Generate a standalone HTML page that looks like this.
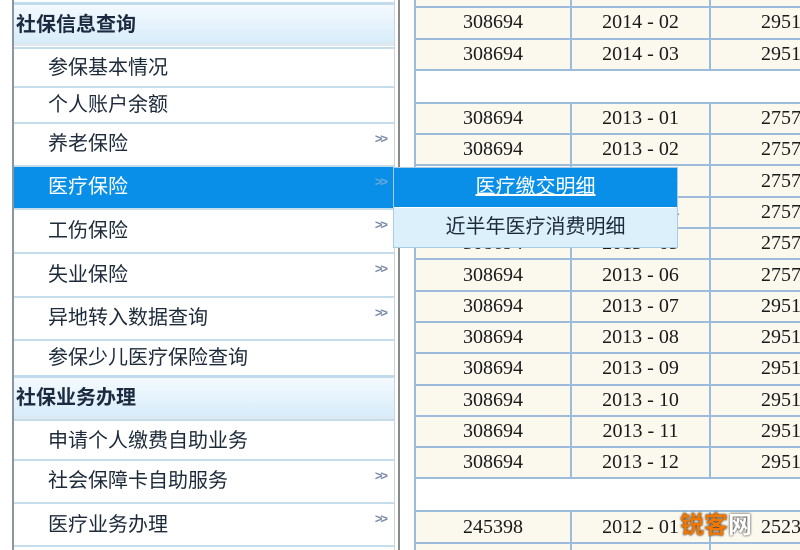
<!DOCTYPE html>
<html style="overflow:hidden;width:800px;height:550px"><head><meta charset="utf-8"><style>
body{margin:0;width:800px;height:550px;overflow:hidden;background:#fff;position:relative;font-family:"Liberation Sans","Noto Sans CJK SC",sans-serif}
.side{position:absolute;left:12px;top:0;width:380px;height:550px;border-left:2px solid #8a96a0;border-right:1px solid #c8d6e2;background:#fff}
.r{position:absolute;left:0;width:380px;border-top:2px solid #c5dcea;font-size:20px;color:#1c2a3a;box-sizing:border-box;padding-left:34px}
.h{position:absolute;left:0;width:380px;font-size:20px;font-weight:bold;color:#1c2a40;padding-left:2px;box-sizing:border-box;background:linear-gradient(#f4fafe,#d7ecfa);border-top:3px solid #c2dbec;border-bottom:3px solid #dfe8ef}
.ar{position:absolute;right:8px;top:8px;font-size:13px;line-height:14px;color:#7a8aa8;font-weight:bold;letter-spacing:-2px}
.sel{background:#0a8fe8;color:#fff}
.sel .ar{color:#6aa8d8}
.vl{position:absolute;top:0;height:550px;width:2px;background:#8a8a8a}
.wrap{position:absolute;left:0;top:0;width:800px;height:550px;overflow:hidden}
table{position:absolute;left:414px;top:-25px;border-collapse:collapse;table-layout:fixed;width:500px;font-family:"Liberation Serif",serif;font-size:20px;color:#1a1a1a}
td{border:2px solid #9dbcdc;background:#fbf8ee;height:29px;line-height:27px;text-align:center;padding:0;box-sizing:border-box;overflow:hidden;white-space:nowrap}
tr{height:31.3px}
td.c3{text-align:left;padding-left:50px}
tr.b td{background:#fff}
tr.b{height:33px}
.pop{position:absolute;left:393px;top:167px;width:283px;border:1px solid #a9cbe6;font-size:20px}
.pop div{height:39px;line-height:38px;text-align:center}
</style></head><body><div class="wrap">
<div class="side">
<div class="h" style="top:2px;height:44px;line-height:40px">社保信息查询</div>
<div class="r" style="top:47px;height:39px;line-height:38px">参保基本情况</div>
<div class="r" style="top:86px;height:36px;line-height:34px">个人账户余额</div>
<div class="r" style="top:122px;height:43px;line-height:40px">养老保险<span class="ar">&gt;&gt;</span></div>
<div class="r sel" style="top:165px;height:43px;line-height:40px">医疗保险<span class="ar">&gt;&gt;</span></div>
<div class="r" style="top:208px;height:44px;line-height:42px">工伤保险<span class="ar">&gt;&gt;</span></div>
<div class="r" style="top:252px;height:44px;line-height:42px">失业保险<span class="ar">&gt;&gt;</span></div>
<div class="r" style="top:296px;height:43px;line-height:40px">异地转入数据查询<span class="ar">&gt;&gt;</span></div>
<div class="r" style="top:339px;height:37px;line-height:34px">参保少儿医疗保险查询</div>
<div class="h" style="top:375px;height:45px;line-height:40px">社保业务办理</div>
<div class="r" style="top:419px;height:40px;line-height:40px">申请个人缴费自助业务</div>
<div class="r" style="top:459px;height:43px;line-height:40px">社会保障卡自助服务<span class="ar">&gt;&gt;</span></div>
<div class="r" style="top:502px;height:43px;line-height:42px">医疗业务办理<span class="ar">&gt;&gt;</span></div>
<div class="r" style="top:545px;height:5px"></div>
</div>
<div class="vl" style="left:398px"></div>
<table>
<colgroup><col style="width:156px"><col style="width:139px"><col style="width:205px"></colgroup>
<tr><td>308694</td><td>2014 - 01</td><td class="c3">2951</td></tr>
<tr><td>308694</td><td>2014 - 02</td><td class="c3">2951</td></tr>
<tr><td>308694</td><td>2014 - 03</td><td class="c3">2951</td></tr>
<tr class="b"><td colspan="3"></td></tr>
<tr><td>308694</td><td>2013 - 01</td><td class="c3">2757</td></tr>
<tr><td>308694</td><td>2013 - 02</td><td class="c3">2757</td></tr>
<tr><td>308694</td><td>2013 - 03</td><td class="c3">2757</td></tr>
<tr><td>308694</td><td>2013 - 04</td><td class="c3">2757</td></tr>
<tr><td>308694</td><td>2013 - 05</td><td class="c3">2757</td></tr>
<tr><td>308694</td><td>2013 - 06</td><td class="c3">2757</td></tr>
<tr><td>308694</td><td>2013 - 07</td><td class="c3">2951</td></tr>
<tr><td>308694</td><td>2013 - 08</td><td class="c3">2951</td></tr>
<tr><td>308694</td><td>2013 - 09</td><td class="c3">2951</td></tr>
<tr><td>308694</td><td>2013 - 10</td><td class="c3">2951</td></tr>
<tr><td>308694</td><td>2013 - 11</td><td class="c3">2951</td></tr>
<tr><td>308694</td><td>2013 - 12</td><td class="c3">2951</td></tr>
<tr class="b"><td colspan="3"></td></tr>
<tr><td>245398</td><td>2012 - 01</td><td class="c3">2523</td></tr>
<tr><td>245398</td><td>2012 - 02</td><td class="c3">2523</td></tr>
</table>
<div class="pop">
<div style="background:#0a8fe8;color:#fff;text-decoration:underline">医疗缴交明细</div>
<div style="background:#dcf0fc;color:#1c2a3a;border-top:1px solid #fff">近半年医疗消费明细</div>
</div>
<div style="position:absolute;left:680px;top:505px;font-size:24px;font-weight:bold;color:#f07800;text-shadow:0 0 2px #000">锐客<span style="color:#fff">网</span></div>
</div></body></html>
